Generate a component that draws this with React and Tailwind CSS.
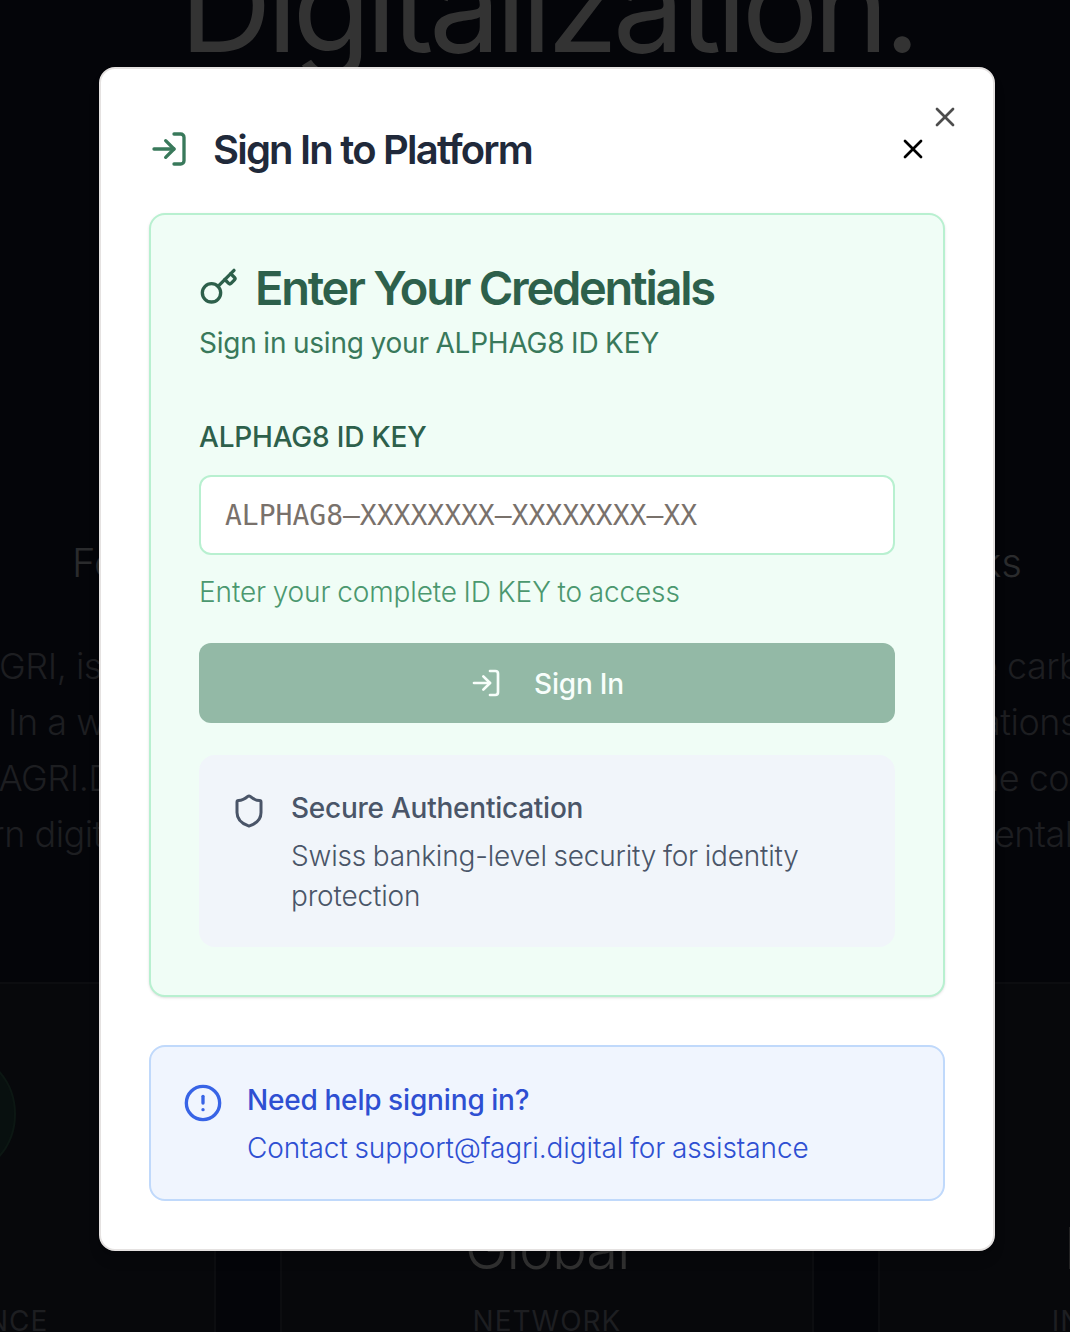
import { LogIn, X, Key, Shield, CircleAlert } from "lucide-react";

const missionLines = [
  { left: "FAGRI, is", leftClass: "-ml-[41px]", right: "e carbon", rightClass: "-ml-[18px]" },
  { left: "In a w", leftClass: "ml-[8px]", right: "ations", rightClass: "-ml-[14px]" },
  { left: "FAGRI.D", leftClass: "-ml-[19px]", right: "he con", rightClass: "-ml-[17px]" },
  { left: "ern digit", leftClass: "-ml-[29px]", right: "ental", rightClass: "-ml-px" },
];

function Backdrop() {
  return (
    <div className="flex h-full w-full flex-col overflow-hidden bg-[#040509]" aria-hidden="true">
      <div className="flex h-[540px] shrink-0 justify-center">
        <h1 className="-mt-[74px] ml-[25px] h-[160px] text-[128px] leading-[160px] font-normal tracking-[-5.2px] whitespace-nowrap text-[#333333]">
          Digitalization.
        </h1>
      </div>
      <div className="flex h-[98px] shrink-0 justify-between pt-[3px] pr-[48px] pl-[72px] text-[40px] leading-[40px] font-light text-[#2a2b2d]">
        <span>Fo</span>
        <span>ks</span>
      </div>
      <div className="h-[344px] shrink-0 text-[36px] leading-[56px] font-light tracking-[-0.5px] text-[#1d1e21]">
        {missionLines.map((line) => (
          <div key={line.left} className="flex h-[56px] justify-between whitespace-nowrap">
            <span className={line.leftClass}>{line.left}</span>
            <span className="w-[75px]">
              <span className={`block ${line.rightClass}`}>{line.right}</span>
            </span>
          </div>
        ))}
      </div>
      <div className="-ml-[317px] grid w-[1728px] shrink-0 grid-cols-3 gap-[64px]">
        <StatCard value="ISO" valueClass="justify-center" label="COMPLIANCE" labelClass="justify-end pr-[166px]" />
        <StatCard value="Global" valueClass="justify-center" label="NETWORK" labelClass="justify-center" />
        <StatCard value="Impact" valueClass="pl-[184px]" label="INNOVATION" labelClass="pl-[172px]" />
      </div>
    </div>
  );
}

function StatCard({ value, valueClass, label, labelClass }) {
  return (
    <div className="flex h-[420px] flex-col items-center rounded-sm border-2 border-[#0c0d10] bg-[#07080b] pt-[64px]">
      <div className="ml-[1px] size-[132px] shrink-0 rounded-full border-2 border-[#0c1713] bg-[#08100f]" />
      <div className={`mt-[32px] flex w-full text-[58px] leading-[72px] font-light tracking-[-1.2px] text-[#303030] ${valueClass}`}>
        {value}
      </div>
      <div className={`mt-[17px] flex w-full text-[28px] leading-[40px] font-normal tracking-[1px] text-[#1d1e21] ${labelClass}`}>
        {label}
      </div>
    </div>
  );
}

function CredentialsCard() {
  return (
    <section className="rounded-2xl border-2 border-[#b8f0d0] bg-[#f0fdf6] p-12 shadow-sm">
      <div className="flex items-center gap-4 text-[#2d604b]">
        <Key className="size-10 shrink-0" strokeWidth={2} />
        <h3 className="pt-[2px] text-[47px] leading-[46px] font-semibold tracking-[-2.25px] whitespace-nowrap">Enter Your Credentials</h3>
      </div>
      <p className="mt-3 text-[28px] leading-10 font-normal tracking-[-0.2px] [word-spacing:-1px] text-[#39795b]">Sign in using your ALPHAG8 ID KEY</p>

      <form className="mt-[54px]">
        <label htmlFor="idkey" className="block text-[28px] leading-10 font-medium tracking-[-0.2px] text-[#2d604b]">
          ALPHAG8 ID KEY
        </label>
        <input
          id="idkey"
          placeholder="ALPHAG8–XXXXXXXX–XXXXXXXX–XX"
          className="mt-[18px] block h-20 w-full rounded-xl border-2 border-[#b8f0d0] bg-white px-6 font-['DejaVu_Sans_Mono',monospace] text-[28px] placeholder:text-[#79716b]"
        />
        <p className="mt-[17px] text-[28px] leading-10 font-light tracking-[-0.12px] [word-spacing:-1px] text-[#4b986f]">Enter your complete ID KEY to access</p>
        <button
          type="button"
          className="mt-[31px] flex h-20 w-full items-center justify-center gap-8 rounded-xl bg-[#93b9a6] text-[28px] font-medium tracking-[-0.2px] text-[#f8fefb]"
        >
          <LogIn className="size-8" />
          <span className="pt-px">Sign In</span>
        </button>
      </form>

      <div className="mt-8 flex items-start gap-6 rounded-2xl bg-[#f1f5fa] p-8 text-[#4a5568]">
        <Shield className="mt-1 h-10 w-9 shrink-0" />
        <div className="pt-px text-[28px] leading-10">
          <p className="font-medium tracking-[-0.25px]">Secure Authentication</p>
          <p className="mt-2 -mb-px font-light tracking-[-0.18px] [word-spacing:-1px]">Swiss banking-level security for identity protection</p>
        </div>
      </div>
    </section>
  );
}

export default function App() {
  return (
    <div className="relative h-[1332px] w-[1070px] overflow-hidden font-['Inter',sans-serif]">
      <Backdrop />
      <div
        role="dialog"
        className="absolute top-[67px] left-[99px] h-[1184px] w-[896px] rounded-2xl border-2 border-[#e5e2e1] bg-white p-12 shadow-lg"
      >
        <header className="mb-8 flex h-16 items-center justify-between">
          <div className="flex items-center gap-6">
            <LogIn className="size-10 text-[#39795b]" />
            <h2 className="pt-[2px] text-[40px] leading-[40px] font-semibold tracking-[-1.8px] whitespace-nowrap text-[#20293a]">
              Sign In to Platform
            </h2>
          </div>
          <button type="button" aria-label="Close" className="flex size-16 items-center justify-center text-black">
            <X className="size-8" />
          </button>
        </header>

        <CredentialsCard />

        <aside className="mt-12 flex items-start gap-6 rounded-2xl border-2 border-[#c0d9fb] bg-[#f0f5fe] p-8">
          <CircleAlert className="mt-1 size-10 shrink-0 text-[#3864e6]" />
          <div className="pt-px text-[28px] leading-10 text-[#2e4fd2]">
            <p className="font-medium tracking-[-0.15px] [word-spacing:-0.7px]">Need help signing in?</p>
            <p className="mt-2 -mb-px font-light tracking-[-0.1px] [word-spacing:-1px]">Contact support@fagri.digital for assistance</p>
          </div>
        </aside>

        <button type="button" aria-label="Dismiss" className="absolute top-8 right-8 text-[#4d4d4d]">
          <X className="size-8" />
        </button>
      </div>
    </div>
  );
}
